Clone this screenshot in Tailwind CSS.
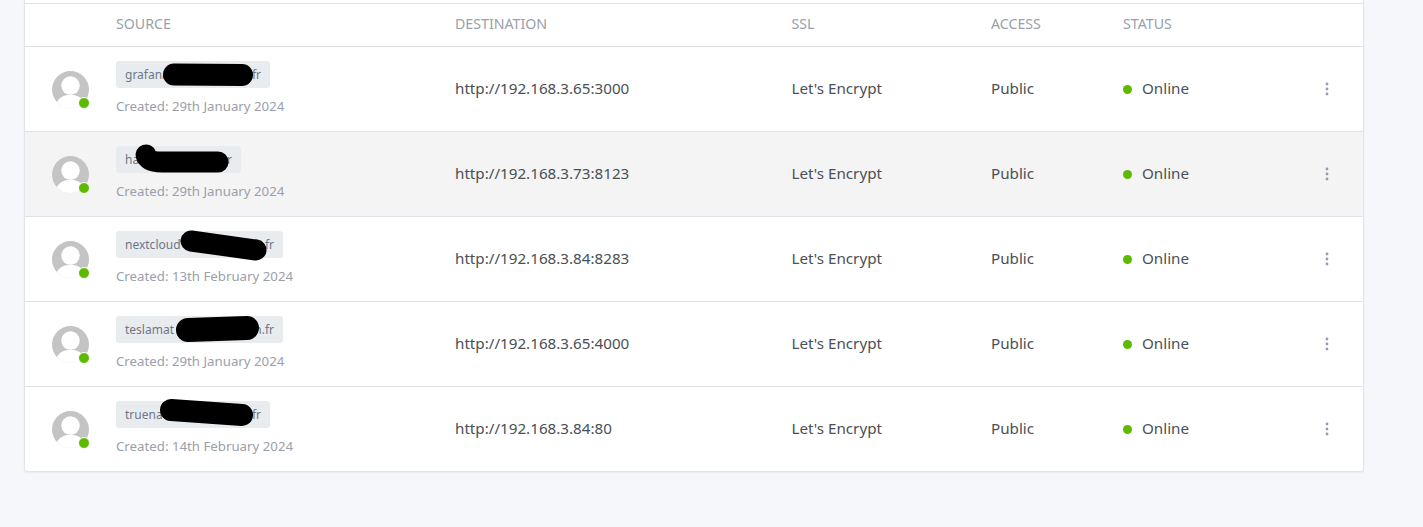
<!DOCTYPE html>
<html lang="en">
<head>
    <meta charset="UTF-8">
    <title>Proxy Hosts</title>
    <script src="https://cdn.jsdelivr.net/npm/@tailwindcss/browser@4"></script>
</head>
<body class="bg-[#f5f7fb] h-[527px] overflow-hidden font-['Noto_Sans',sans-serif] text-[15.2px] text-[#495057]">
    <div id="card" class="ml-[24px] w-[1340px] bg-white border border-t-0 border-[#e2e4ea] rounded-b-[3px] shadow-[0_1px_2px_rgba(0,0,0,0.05)]">
        <div class="h-[3px]"></div>
        <!-- Header -->
        <div class="h-[44px] pb-[2px] border-y border-[#e0e2e9] grid grid-cols-[91px_339px_336.5px_199.5px_132px_1fr] items-center text-[14.2px] text-[#9aa0ac]">
            <div></div><div>SOURCE</div><div>DESTINATION</div><div>SSL</div><div>ACCESS</div><div>STATUS</div>
        </div>
        <div id="rows"></div>
    </div>

    <script>
        // Black strokes are the redactions on the domain names, coords are relative to the tag
        const hosts = [
            { start: "grafana", end: "fr", tag: "w-[154px]", created: "29th January 2024", dest: "http://192.168.3.65:3000", mark: "M58 13.5 L126 14", thick: 22 },
            { start: "ha", end: "r", tag: "w-[125px]", created: "29th January 2024", dest: "http://192.168.3.73:8123", mark: "M30 9 C32 15 38 16 46 16 L102 16", thick: 21, hover: true },
            { start: "nextcloud", end: "fr", tag: "w-[167px]", created: "13th February 2024", dest: "http://192.168.3.84:8283", mark: "M75 10 L140 19", thick: 21 },
            { start: "teslamat", end: "n.fr", tag: "w-[167px]", created: "29th January 2024", dest: "http://192.168.3.65:4000", mark: "M72 14 L131 12", thick: 24 },
            { start: "truena", end: "fr", tag: "w-[154px]", created: "14th February 2024", dest: "http://192.168.3.84:80", mark: "M55 9 L126 14", thick: 22 }
        ];

        document.getElementById("rows").innerHTML = hosts.map((h, i) => `
            <div class="grid grid-cols-[91px_339px_336.5px_199.5px_132px_1fr] items-center ${i ? "h-[85px] border-t border-[#e0e2e9]" : "h-[84px]"} ${h.hover ? "bg-[#f4f4f4]" : ""}">
                <div class="pl-[27px]">
                    <div class="relative w-[37px] h-[37px]">
                        <svg viewBox="0 0 38 38" class="w-[37px] h-[37px]">
                            <circle cx="19" cy="19" r="19" fill="#c4c4c4"/>
                            <circle cx="19" cy="15" r="9.5" fill="#fff"/>
                            <path d="M5 32 C8 27 13 24.5 19 24.5 C25 24.5 30 27 33 32 C29 36 24 38 19 38 C14 38 9 36 5 32 Z" fill="#fff"/>
                        </svg>
                        <span class="absolute right-[-1px] bottom-[-1px] w-[12px] h-[12px] rounded-full bg-[#5eba00] border border-white"></span>
                    </div>
                </div>
                <div class="mb-[2px]">
                    <div class="relative ${h.tag} h-[27px] rounded-[3px] bg-[#e9ecef] px-[9px] text-[12px] leading-[27px] text-[#6e7687] whitespace-nowrap flex justify-between">
                        <span>${h.start}</span><span>${h.end}</span>
                        <svg class="absolute left-0 top-0 overflow-visible w-px h-px"><path d="${h.mark}" fill="none" stroke="#000" stroke-width="${h.thick}" stroke-linecap="round"/></svg>
                    </div>
                    <div class="mt-[9px] text-[13.25px] leading-[18px] text-[#9aa0ac]">Created: ${h.created}</div>
                </div>
                <div class="mb-[2px]">${h.dest}</div>
                <div class="mb-[2px]">Let's Encrypt</div>
                <div class="mb-[2px]">Public</div>
                <div class="flex items-center">
                    <span class="w-[9px] h-[9px] rounded-full bg-[#5eba00] mr-[10px] mt-[1px]"></span>
                    <span class="mb-[2px]">Online</span>
                    <svg viewBox="0 0 4 14" class="w-[4px] h-[14px] ml-auto mr-[34px]" fill="#9a9aac"><circle cx="2" cy="2" r="1.4"/><circle cx="2" cy="7" r="1.4"/><circle cx="2" cy="12" r="1.4"/></svg>
                </div>
            </div>`).join("");
    </script>
</body>
</html>
